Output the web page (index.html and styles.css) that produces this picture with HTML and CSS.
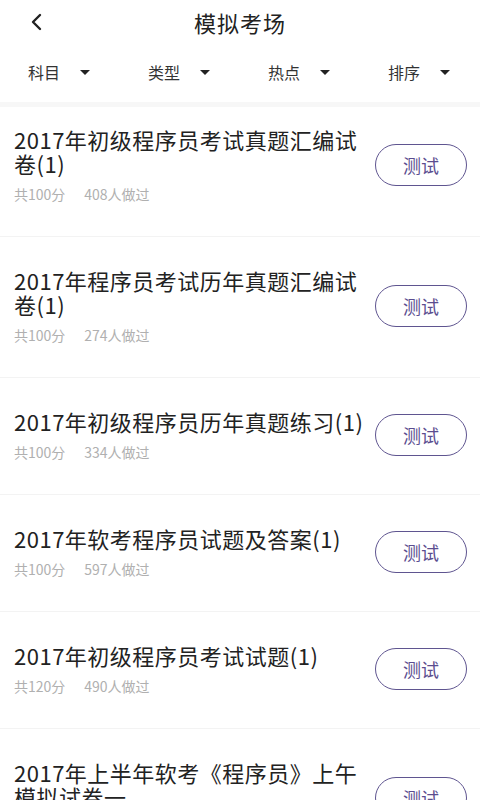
FILE: index.html
```html
<!DOCTYPE html>
<html lang="zh">
<head>
  <meta charset="UTF-8" />
  <title>模拟考场</title>
  <link rel="stylesheet" href="styles.css">
</head>
<body>

  <div class="topbar">
    <span class="back">
      <svg width="14" height="18" viewBox="0 0 14 18"><path d="M11 2 L4 9 L11 16" fill="none" stroke="#222" stroke-width="2.4" stroke-linecap="round" stroke-linejoin="round"/></svg>
    </span>
    <h1>模拟考场</h1>
  </div>

  <div class="filters">
    <div class="filter">科目<i class="caret"></i></div>
    <div class="filter">类型<i class="caret"></i></div>
    <div class="filter">热点<i class="caret"></i></div>
    <div class="filter">排序<i class="caret"></i></div>
  </div>
  <div class="band"></div>

  <div class="list">
    <div class="item">
      <div class="info">
        <div class="name">2017年初级程序员考试真题汇编试卷(1)</div>
        <div class="meta"><span>共100分</span><span>408人做过</span></div>
      </div>
      <button class="test">测试</button>
    </div>
    <div class="item">
      <div class="info">
        <div class="name">2017年程序员考试历年真题汇编试卷(1)</div>
        <div class="meta"><span>共100分</span><span>274人做过</span></div>
      </div>
      <button class="test">测试</button>
    </div>
    <div class="item">
      <div class="info">
        <div class="name">2017年初级程序员历年真题练习(1)</div>
        <div class="meta"><span>共100分</span><span>334人做过</span></div>
      </div>
      <button class="test">测试</button>
    </div>
    <div class="item">
      <div class="info">
        <div class="name">2017年软考程序员试题及答案(1)</div>
        <div class="meta"><span>共100分</span><span>597人做过</span></div>
      </div>
      <button class="test">测试</button>
    </div>
    <div class="item">
      <div class="info">
        <div class="name">2017年初级程序员考试试题(1)</div>
        <div class="meta"><span>共120分</span><span>490人做过</span></div>
      </div>
      <button class="test">测试</button>
    </div>
    <div class="item">
      <div class="info">
        <div class="name">2017年上半年软考《程序员》上午模拟试卷一</div>
        <div class="meta"><span>共75分</span><span>312人做过</span></div>
      </div>
      <button class="test">测试</button>
    </div>
  </div>

</body>
</html>
```

FILE: styles.css
```css
body {
  margin: 0;
  background: #fff;
  font-family: "Noto Sans CJK SC", "Noto Sans", sans-serif;
  color: #222;
  overflow: hidden;
}

.topbar {
  position: relative;
  height: 46px;
  display: flex;
  align-items: center;
  justify-content: center;
}

.topbar h1 {
  margin: 0 0 3px;
  font-size: 22px;
  font-weight: normal;
  color: #222;
  letter-spacing: 1px;
}

.back {
  position: absolute;
  left: 29px;
  top: 13px;
  display: flex;
}

.filters {
  height: 56px;
  box-sizing: border-box;
  padding-bottom: 4px;
  display: flex;
}

.filter {
  flex: 1;
  display: flex;
  align-items: center;
  padding-left: 28px;
  font-size: 16px;
  color: #333;
}

.caret {
  margin-left: 20px;
  width: 0;
  height: 0;
  border-left: 5px solid transparent;
  border-right: 5px solid transparent;
  border-top: 5px solid #222;
}

.band {
  height: 5px;
  background: #f7f7f7;
}

.item {
  display: flex;
  align-items: center;
  padding: 31px 13px 33px 14px;
  border-bottom: 1px solid #f3f3f3;
}

.item:first-child {
  padding-top: 20px;
}

.info {
  flex: 1;
  padding-right: 8px;
}

.name {
  font-size: 22px;
  line-height: 24px;
  letter-spacing: 0.5px;
  color: #222;
}

.meta {
  margin-top: 10px;
  font-size: 14px;
  line-height: 18px;
  color: #b0b0b0;
  display: flex;
  gap: 19px;
}

.test {
  width: 92px;
  height: 42px;
  flex-shrink: 0;
  border: 1.5px solid #5f5590;
  border-radius: 21px;
  background: #fff;
  color: #5b4d8f;
  font-family: inherit;
  font-size: 18px;
  padding: 0;
}
```
